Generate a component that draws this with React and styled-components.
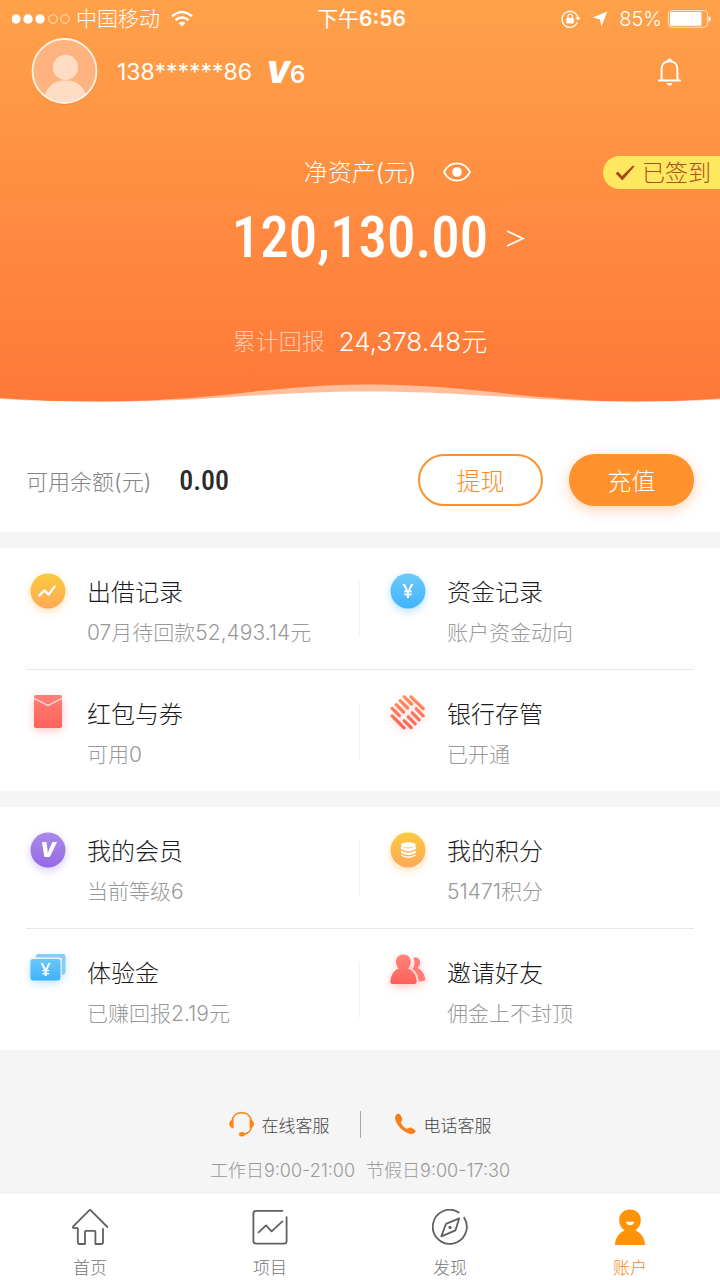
import React from 'react';
import styled, { createGlobalStyle } from 'styled-components';

const GlobalStyle = createGlobalStyle`
  *, *::before, *::after { box-sizing: border-box; }
  body {
    margin: 0;
    background: #f5f5f5;
    color: #333;
    font-family: Inter, "Noto Sans CJK SC", sans-serif;
    font-weight: 300;
  }
  button { font: inherit; padding: 0; border: 0; background: none; color: inherit; cursor: pointer; }
  a { color: inherit; text-decoration: none; }
  svg { display: block; flex: none; }
`;

const Page = styled.div`
  min-height: 100vh;
  display: flex;
  flex-direction: column;
`;

/* ---------- header ---------- */

const Hero = styled.header`
  display: flex;
  flex-direction: column;
  color: #fff;
  background: linear-gradient(180deg, #ffa14a 0%, #ff9343 35%, #ff7838 100%);
`;

const StatusBar = styled.div`
  display: grid;
  grid-template-columns: 1fr auto 1fr;
  align-items: center;
  height: 37px;
  padding: 0 9px 0 12px;
  font-size: 21px;
  line-height: 36px;
`;

const StatusGroup = styled.div`
  display: flex;
  align-items: center;
  gap: ${p => p.$gap}px;
  justify-content: ${p => (p.$end ? 'flex-end' : 'flex-start')};
`;

const Clock = styled.time`
  font-weight: 600;
  span { font-weight: 400; }
`;

const Charge = styled.span`
  font-size: 20px;
`;

const UserRow = styled.div`
  display: flex;
  align-items: center;
  height: 68px;
  padding: 0 39px 0 31px;
`;

const Phone = styled.span`
  margin-left: 19px;
  padding-top: 2px;
  font-size: 23px;
  font-weight: 400;
`;

const Level = styled.span`
  display: flex;
  align-items: baseline;
  margin: 4px auto 0 14px;
  font-size: 24px;
  line-height: 28px;
  font-weight: 600;
  i { font-size: 30px; font-weight: 900; }
`;

const CenterRow = styled.div`
  display: grid;
  grid-template-columns: 1fr auto 1fr;
  align-items: center;
  margin-top: ${p => p.$top}px;
`;

const Aside = styled.div`
  display: flex;
  align-items: center;
  justify-content: space-between;
  padding-left: ${p => p.$left}px;
`;

const AssetLabel = styled.span`
  grid-column: 2;
  padding-top: 2px;
  font-size: 24px;
  line-height: 34px;
`;

const SignedBadge = styled.button`
  display: flex;
  align-items: center;
  gap: 7px;
  height: 33px;
  padding: 2px 9px 0 12px;
  border-radius: 17px 0 0 17px;
  background: #ffe760;
  color: #a8501c;
  font-size: 23px;
  line-height: 31px;
`;

const Amount = styled.strong`
  grid-column: 2;
  font-family: "Roboto Condensed", Roboto, sans-serif;
  font-size: 57px;
  line-height: 72px;
  font-weight: 500;
`;

const Returns = styled.p`
  display: flex;
  align-items: center;
  justify-content: center;
  gap: 14px;
  margin: 50px 0 22px;
  font-size: 26px;
  line-height: 36px;
  span { font-size: 23px; color: rgba(255, 255, 255, 0.6); }
`;

/* ---------- balance ---------- */

const Balance = styled.section`
  display: flex;
  align-items: center;
  height: 130px;
  padding: 26px 26px 0;
  background: #fff;
`;

const BalanceLabel = styled.span`
  font-size: 22px;
  color: #858585;
`;

const BalanceValue = styled.strong`
  margin: 0 auto 0 28px;
  font-family: "Roboto Condensed", Roboto, sans-serif;
  font-size: 28px;
  font-weight: 500;
  color: #2b2b2b;
`;

const Pill = styled.button`
  width: 125px;
  height: 52px;
  margin-left: 26px;
  padding-bottom: 2px;
  border-radius: 26px;
  font-size: 24px;
  color: ${p => (p.$solid ? '#fff' : '#ff8a1c')};
  background: ${p => (p.$solid ? '#ff922c' : '#fff')};
  border: 2px solid #ff922c;
  box-shadow: ${p => (p.$solid ? '0 4px 14px rgba(255, 130, 50, 0.35)' : 'none')};
`;

/* ---------- feature cards ---------- */

const Card = styled.section`
  margin-top: 16px;
  background: #fff;
`;

const CardRow = styled.div`
  display: grid;
  grid-template-columns: 1fr 1fr;
`;

const Rule = styled.hr`
  height: 1px;
  margin: 0 26px;
  border: 0;
  background: #e8e8e8;
`;

const Cell = styled.a`
  display: flex;
  gap: 21px;
  padding: 25px 0 20px 30px;
  background: ${p =>
    p.$divided ? 'linear-gradient(#f2f2f2, #f2f2f2) right 50% / 1px 56px no-repeat' : 'none'};
`;

const Glow = styled.span`
  flex: none;
  width: 36px;
  height: 36px;
  filter: drop-shadow(0 3px 4px ${p => p.$color});
`;

const CellText = styled.span`
  display: flex;
  flex-direction: column;
  gap: 6px;
  padding-top: 2px;
`;

const Title = styled.span`
  font-size: 24px;
  line-height: 36px;
  color: #1c1c1c;
`;

const Sub = styled.span`
  font-size: 21px;
  line-height: 32px;
  color: #999;
`;

/* ---------- support ---------- */

const Support = styled.footer`
  flex: 1;
  padding: 58px 0 10px;
`;

const SupportLinks = styled.div`
  display: flex;
  align-items: center;
  justify-content: center;
  gap: 30px;
  height: 32px;
`;

const SupportLink = styled.a`
  display: flex;
  align-items: center;
  gap: 7px;
  font-size: 17px;
  color: #444;
`;

const Bar = styled.span`
  width: 1px;
  height: 27px;
  background: #a8a8a8;
`;

const Hours = styled.p`
  display: flex;
  justify-content: center;
  gap: 11px;
  margin: 18px 0 0;
  font-size: 18px;
  line-height: 26px;
  color: #999;
`;

/* ---------- tab bar ---------- */

const TabBar = styled.nav`
  display: grid;
  grid-template-columns: repeat(4, 1fr);
  background: #fff;
`;

const Tab = styled.a`
  display: flex;
  flex-direction: column;
  align-items: center;
  gap: 11px;
  padding: 15px 0 0;
  font-size: 17px;
  line-height: 24px;
  color: ${p => (p.$active ? '#f57f10' : '#757575')};
`;

/* ---------- drawings ---------- */

const Dots = () => (
  <svg width="59" height="12" viewBox="0 0 59 12" aria-hidden="true">
    {[4, 16, 28].map(x => <circle key={x} cx={x} cy="6" r="4.7" fill="#fff" />)}
    {[41, 53].map(x => <circle key={x} cx={x} cy="6" r="4.3" fill="none" stroke="#ffe3c4" strokeWidth="1" />)}
  </svg>
);

const Wifi = () => (
  <svg width="22" height="16" viewBox="0 0 22 16" fill="none" stroke="#fff" strokeWidth="2.4" aria-hidden="true">
    <path d="M1 5.2 Q11 -3 21 5.2" />
    <path d="M4.6 9 Q11 3.8 17.4 9" />
    <path d="M7.6 12 Q11 9 14.4 12 L11 15.6 Z" fill="#fff" stroke="none" />
  </svg>
);

const RotationLock = () => (
  <svg width="20" height="18" viewBox="0 0 20 18" fill="none" stroke="#fff" strokeWidth="1.3" aria-hidden="true">
    <path d="M16.3 12.6 A8 8 0 1 1 17 9" />
    <path d="M14.2 7.6 L17 10.4 L19.6 7.6 Z" fill="#fff" stroke="none" />
    <rect x="5.4" y="8" width="7.4" height="5.4" rx="0.6" fill="#fff" stroke="none" />
    <path d="M7 8 V6.3 a2.1 2.1 0 0 1 4.2 0 V8" />
  </svg>
);

const Location = () => (
  <svg width="16" height="16" viewBox="0 0 16 16" fill="#fff" aria-hidden="true">
    <path d="M15.4 0.6 L9.4 15.4 L8 8.4 L0.6 6.4 Z" />
  </svg>
);

const Battery = () => (
  <svg width="43" height="18" viewBox="0 0 43 18" aria-hidden="true">
    <rect x="0.6" y="0.6" width="38.8" height="16.6" rx="3" fill="none" stroke="#ffe6cc" strokeWidth="1" />
    <rect x="2" y="2" width="31.5" height="13.8" rx="1" fill="#fff" />
    <path d="M40.6 6 Q42.8 7 42.8 9 T40.6 12 Z" fill="#fff" />
  </svg>
);

const Avatar = () => (
  <svg width="67" height="67" viewBox="0 0 67 67" aria-label="头像" role="img">
    <defs>
      <clipPath id="avatarClip"><circle cx="33.5" cy="33.5" r="31.5" /></clipPath>
    </defs>
    <circle cx="33.5" cy="34.5" r="32.5" fill="rgba(200,90,20,0.25)" />
    <circle cx="33.5" cy="33" r="32" fill="#ffb380" />
    <g clipPath="url(#avatarClip)" fill="#ffdcc4">
      <circle cx="34.5" cy="29.4" r="12.6" />
      <path d="M12.5 66 C13 50 22 42.6 34.5 42.6 C47 42.6 56 50 56.5 66 Z" />
    </g>
    <circle cx="33.5" cy="33" r="32" fill="none" stroke="#fff3e6" strokeWidth="1.8" />
  </svg>
);

const Bell = () => (
  <svg width="23" height="29" viewBox="0 0 23 29" fill="none" stroke="#fff" strokeWidth="2" strokeLinecap="round" strokeLinejoin="round" aria-hidden="true">
    <path d="M3.6 22 V12 C3.6 7 7 4.2 11.5 4.2 C16 4.2 19.4 7 19.4 12 V22" />
    <path d="M1 23.4 H22" />
    <path d="M10 3.6 L11.5 2.4 L13 3.6" />
    <path d="M8.6 26 H14.4 Q13.6 28.8 11.5 28.8 T8.6 26 Z" fill="#fff" stroke="none" />
  </svg>
);

const Eye = () => (
  <svg width="28" height="20" viewBox="0 0 28 20" aria-hidden="true">
    <path d="M1 10 C7 -1.6 21 -1.6 27 10 C21 21.6 7 21.6 1 10 Z" fill="none" stroke="#fff" strokeWidth="1.8" strokeLinejoin="round" />
    <circle cx="14" cy="10" r="4.8" fill="#fff" />
  </svg>
);

const Check = () => (
  <svg width="20" height="16" viewBox="0 0 20 16" aria-hidden="true">
    <path d="M0.6 8.6 L3 6.6 L7 11 L18 0.6 L19.4 1.6 L7.4 15.6 Z" fill="#a8481a" />
  </svg>
);

const Chevron = () => (
  <svg width="19" height="17" viewBox="0 0 19 17" fill="none" stroke="#fff" strokeWidth="1.8" aria-hidden="true">
    <path d="M1 1 L17 8.5 L1 16" />
  </svg>
);

const WaveShape = styled.svg`
  width: 100%;
  height: 20px;
`;

const Wave = () => (
  <WaveShape viewBox="0 0 720 20" preserveAspectRatio="none" aria-hidden="true">
    <path d="M0 16 C60 20.5 120 21 190 16 C250 11 300 2.5 367 2.5 C435 2.5 480 9 540 15 C610 21 660 20.5 720 16.5 V20 H0 Z" fill="#ffbf9c" />
    <path d="M0 17 C60 20.5 120 20.5 180 18 C250 14.5 300 9.5 367 9.5 C435 9.5 480 13.5 550 17.5 C610 20.5 660 20.5 720 17.5 V20 H0 Z" fill="#fff" />
  </WaveShape>
);

const Gradient = ({ id, from, to }) => (
  <defs>
    <linearGradient id={id} x1="0" y1="0" x2="0" y2="1">
      <stop offset="0" stopColor={from} />
      <stop offset="1" stopColor={to} />
    </linearGradient>
  </defs>
);

const Icon = ({ children, ...rest }) => (
  <svg width="36" height="36" viewBox="0 0 36 36" aria-hidden="true" {...rest}>{children}</svg>
);

const Symbol = styled.text`
  font-family: ${p => (p.$italic ? 'Inter' : '"Open Sans"')}, sans-serif;
  font-weight: ${p => p.$weight};
  font-style: ${p => (p.$italic ? 'italic' : 'normal')};
  font-size: ${p => p.$size}px;
  text-anchor: middle;
  fill: #fff;
`;

const LendIcon = () => (
  <Icon>
    <Gradient id="lend" from="#f9cb3f" to="#ffa956" />
    <circle cx="18" cy="18" r="17.5" fill="url(#lend)" />
    <path d="M9.4 22.4 L14.4 17.4 L18.6 21.6 L24.6 13.6" fill="none" stroke="#fff" strokeWidth="2.4" strokeLinecap="round" strokeLinejoin="round" />
  </Icon>
);

const FundIcon = () => (
  <Icon>
    <Gradient id="fund" from="#6fcaf8" to="#41b3ff" />
    <circle cx="18" cy="18" r="17.5" fill="url(#fund)" />
    <Symbol x="18" y="25" $size={20} $weight={600}>¥</Symbol>
  </Icon>
);

const EnvelopeIcon = () => (
  <Icon>
    <Gradient id="envelope" from="#ff8078" to="#ff625a" />
    <rect x="4" y="0" width="28" height="33" rx="2" fill="url(#envelope)" />
    <path d="M4 3.4 L18 10.4 L32 3.4" fill="none" stroke="#ffd9d4" strokeWidth="1.6" />
  </Icon>
);

const BankIcon = () => (
  <Icon>
    <defs>
      <linearGradient id="bank" gradientUnits="userSpaceOnUse" x1="0" y1="0" x2="0" y2="34">
        <stop offset="0" stopColor="#ff9060" />
        <stop offset="1" stopColor="#ff6058" />
      </linearGradient>
    </defs>
    <g stroke="url(#bank)" strokeWidth="3.2" strokeLinecap="round">
      <path d="M2.2 13.4 L9.4 20.6" />
      <path d="M6.2 9.6 L13.6 17" />
      <path d="M10.2 5.6 L17.6 13" />
      <path d="M14.2 1.8 L21.6 9" />
      <path d="M21 1.8 L33.2 13.6" />
      <path d="M2.2 21 L14 32.8" />
      <path d="M14.2 25.8 L21.2 32.6" />
      <path d="M18.2 21.8 L25.2 28.8" />
      <path d="M22.2 17.8 L29.2 24.8" />
      <path d="M26.2 13.8 L33.2 20.8" />
    </g>
  </Icon>
);

const MemberIcon = () => (
  <Icon>
    <Gradient id="member" from="#a98be6" to="#9568e6" />
    <circle cx="18" cy="18" r="17.5" fill="url(#member)" />
    <Symbol x="18" y="25" $size={20} $weight={900} $italic>V</Symbol>
  </Icon>
);

const PointsIcon = () => (
  <Icon>
    <Gradient id="points" from="#fbca3f" to="#ffa85a" />
    <circle cx="18" cy="18" r="17.5" fill="url(#points)" />
    <ellipse cx="18.4" cy="12.8" rx="7.4" ry="2.6" fill="#fff" />
    <g fill="#fff">
      <path d="M11 13.8 Q18.4 19 25.8 13.8 V17 Q18.4 21.6 11 17 Z" />
      <path d="M11 18.4 Q18.4 23 25.8 18.4 V20.8 Q18.4 25.4 11 20.8 Z" />
      <path d="M11 22.2 Q18.4 26.8 25.8 22.2 V23.6 Q18.4 28.4 11 23.6 Z" />
    </g>
  </Icon>
);

const TrialIcon = () => (
  <Icon>
    <Gradient id="trial" from="#6cc6fa" to="#3fb2ff" />
    <path d="M8 0 H33 Q35.5 0 35.5 2.5 V18 Q35.5 20.6 32 21 V6 Q32 3.6 29.6 3.6 H6 V2 Q6 0 8 0 Z" fill="#85cdf8" />
    <rect x="0.4" y="5" width="30" height="21.4" rx="2.4" fill="url(#trial)" />
    <Symbol x="15.6" y="22" $size={18} $weight={600}>¥</Symbol>
  </Icon>
);

const FriendsIcon = () => (
  <Icon>
    <Gradient id="friends" from="#ff857c" to="#ff6059" />
    <path d="M23.4 4 C27.4 2.4 30.6 5.4 30 9.6 C29.8 11.8 28.6 13 27.6 14 C32 16 35 20.6 35.4 26 Q33 27.6 28.8 27.2 C28 21.4 26.4 18 22.6 15 C24.8 11.8 25.2 8 23.4 4 Z" fill="#ff7d75" />
    <path d="M13.4 0.4 C17.8 0.4 20.8 3.4 20.8 7.6 C20.8 10.6 19.6 12.8 18 14.4 C23.4 16.4 26.6 21.4 26.6 28 Q26.6 30 24.6 30 H2.4 Q0.4 30 0.4 28 C0.6 21.4 3.6 16.4 8.8 14.4 C7.2 12.8 6 10.6 6 7.6 C6 3.4 9 0.4 13.4 0.4 Z" fill="url(#friends)" />
  </Icon>
);

const HeadsetIcon = () => (
  <svg width="26" height="26" viewBox="0 0 26 26" fill="none" aria-hidden="true">
    <path d="M3 11 C3.4 5 7.4 1.6 12.6 1.6 C18 1.6 22 5 22.4 11 V15 C22.4 19.6 19 22.6 14.6 23.2" stroke="#f58a22" strokeWidth="1.7" />
    <path d="M4.6 8.6 V17.4 C1.6 17 0.2 15.2 0.2 13 S1.6 9 4.6 8.6 Z M20.6 8.6 V17.4 C23.6 17 25 15.2 25 13 S23.6 9 20.6 8.6 Z" fill="#ff8410" />
    <ellipse cx="13" cy="23.2" rx="3" ry="2.2" fill="#ff8410" />
  </svg>
);

const PhoneIcon = () => (
  <svg width="26" height="26" viewBox="0 0 26 26" fill="#f97f1a" aria-hidden="true">
    <path d="M5.2 3.8 C6.6 2.4 8.6 2.6 9.6 4.2 L11 7 C11.6 8.4 11.4 9.2 10.4 10.2 C9.8 11 9.8 11.6 10.2 12.4 C11.4 14.6 13 16.2 15.2 17.4 C16 17.8 16.8 17.8 17.4 17.2 C18.4 16.4 19.4 16.2 20.6 16.8 L23.4 18.4 C25 19.4 24.8 20.8 23.6 21.8 C21.4 23.6 18.4 23.2 15.4 21.6 C10.4 18.8 6.4 14.6 4.6 9.8 C3.8 7.4 3.8 5.2 5.2 3.8 Z" />
  </svg>
);

const line = { fill: 'none', stroke: '#606060', strokeWidth: 1.8, strokeLinecap: 'round', strokeLinejoin: 'round' };

const HomeIcon = () => (
  <Icon {...line}>
    <path d="M35.4 18 L18.8 1.4 Q18 0.6 17.2 1.4 L1.2 17.4 Q0.4 19 2 19.2 H5.8 V33 Q5.8 35 7.6 35 H13 V22.6 Q13 21.8 14 21.8 H22.4 Q23.4 21.8 23.4 22.6 V35 H29.2 Q31 35 31 33 V20" />
  </Icon>
);

const ProjectIcon = () => (
  <Icon {...line}>
    <path d="M30.4 1.8 H4 Q1.4 1.8 1.4 4.4 V32 Q1.4 34.6 4 34.6 H32 Q34.6 34.6 34.6 32 V8.2" />
    <path d="M6.6 23.4 L14 16.4 L19.6 22.4 L30.4 12.4" />
  </Icon>
);

const DiscoverIcon = () => (
  <Icon {...line}>
    <path d="M26.8 3.4 A17 17 0 1 0 32.2 8.8" />
    <path d="M27.2 9.4 L23.4 21.4 L9.4 27.4 L14 14.8 Z" />
    <circle cx="18" cy="18.4" r="1.6" fill="#606060" stroke="none" />
  </Icon>
);

const AccountIcon = () => (
  <Icon>
    <path d="M18 0.6 C24.4 0.6 28.8 5.2 28.8 11 C28.8 16 26.6 19 23.4 21.4 C29 23.4 33 29 33 36 H3 C3 29 7 23.4 12.6 21.4 C9.4 19 7.2 16 7.2 11 C7.2 5.2 11.6 0.6 18 0.6 Z" fill="#ff9308" />
    <path d="M14 12.8 H22.2 Q21.6 16.2 18.1 16.2 T14 12.8 Z" fill="#fff" />
  </Icon>
);

/* ---------- page ---------- */

const cards = [
  [
    [
      { icon: LendIcon, glow: 'rgba(255,180,60,0.4)', title: '出借记录', sub: '07月待回款52,493.14元' },
      { icon: FundIcon, glow: 'rgba(70,180,255,0.4)', title: '资金记录', sub: '账户资金动向' },
    ],
    [
      { icon: EnvelopeIcon, glow: 'rgba(255,100,90,0.35)', title: '红包与券', sub: '可用0' },
      { icon: BankIcon, glow: 'rgba(255,100,90,0.25)', title: '银行存管', sub: '已开通' },
    ],
  ],
  [
    [
      { icon: MemberIcon, glow: 'rgba(150,105,230,0.35)', title: '我的会员', sub: '当前等级6' },
      { icon: PointsIcon, glow: 'rgba(255,180,60,0.4)', title: '我的积分', sub: '51471积分' },
    ],
    [
      { icon: TrialIcon, glow: 'rgba(70,180,255,0.35)', title: '体验金', sub: '已赚回报2.19元' },
      { icon: FriendsIcon, glow: 'rgba(255,100,90,0.35)', title: '邀请好友', sub: '佣金上不封顶' },
    ],
  ],
];

const tabs = [
  { icon: HomeIcon, label: '首页' },
  { icon: ProjectIcon, label: '项目' },
  { icon: DiscoverIcon, label: '发现' },
  { icon: AccountIcon, label: '账户', active: true },
];

export default function App() {
  return (
    <Page lang="zh-CN">
      <GlobalStyle />
      <Hero>
        <StatusBar>
          <StatusGroup $gap={11}>
            <StatusGroup $gap={5}>
              <Dots />
              <span>中国移动</span>
            </StatusGroup>
            <Wifi />
          </StatusGroup>
          <Clock><span>下午</span>6:56</Clock>
          <StatusGroup $gap={11} $end>
            <RotationLock />
            <Location />
            <StatusGroup $gap={6}>
              <Charge>85%</Charge>
              <Battery />
            </StatusGroup>
          </StatusGroup>
        </StatusBar>
        <UserRow>
          <Avatar />
          <Phone>138******86</Phone>
          <Level><i>V</i>6</Level>
          <button aria-label="消息"><Bell /></button>
        </UserRow>
        <CenterRow $top={49}>
          <AssetLabel>净资产(元)</AssetLabel>
          <Aside $left={27}>
            <button aria-label="显示金额"><Eye /></button>
            <SignedBadge><Check />已签到</SignedBadge>
          </Aside>
        </CenterRow>
        <CenterRow $top={12}>
          <Amount>120,130.00</Amount>
          <Aside $left={18}>
            <a href="#assets" aria-label="资产详情"><Chevron /></a>
          </Aside>
        </CenterRow>
        <Returns><span>累计回报</span>24,378.48元</Returns>
        <Wave />
      </Hero>

      <Balance>
        <BalanceLabel>可用余额(元)</BalanceLabel>
        <BalanceValue>0.00</BalanceValue>
        <Pill>提现</Pill>
        <Pill $solid>充值</Pill>
      </Balance>

      {cards.map((rows, c) => (
        <Card key={c}>
          {rows.map((cells, r) => (
            <React.Fragment key={r}>
              {r > 0 && <Rule />}
              <CardRow>
                {cells.map(({ icon: Glyph, glow, title, sub }, i) => (
                  <Cell key={title} href="#" $divided={i === 0}>
                    <Glow $color={glow}><Glyph /></Glow>
                    <CellText>
                      <Title>{title}</Title>
                      <Sub>{sub}</Sub>
                    </CellText>
                  </Cell>
                ))}
              </CardRow>
            </React.Fragment>
          ))}
        </Card>
      ))}

      <Support>
        <SupportLinks>
          <SupportLink href="#chat"><HeadsetIcon />在线客服</SupportLink>
          <Bar />
          <SupportLink href="#call"><PhoneIcon />电话客服</SupportLink>
        </SupportLinks>
        <Hours><span>工作日9:00-21:00</span><span>节假日9:00-17:30</span></Hours>
      </Support>

      <TabBar>
        {tabs.map(({ icon: Glyph, label, active }) => (
          <Tab key={label} href="#" $active={active} aria-current={active ? 'page' : undefined}>
            <Glyph />
            {label}
          </Tab>
        ))}
      </TabBar>
    </Page>
  );
}
